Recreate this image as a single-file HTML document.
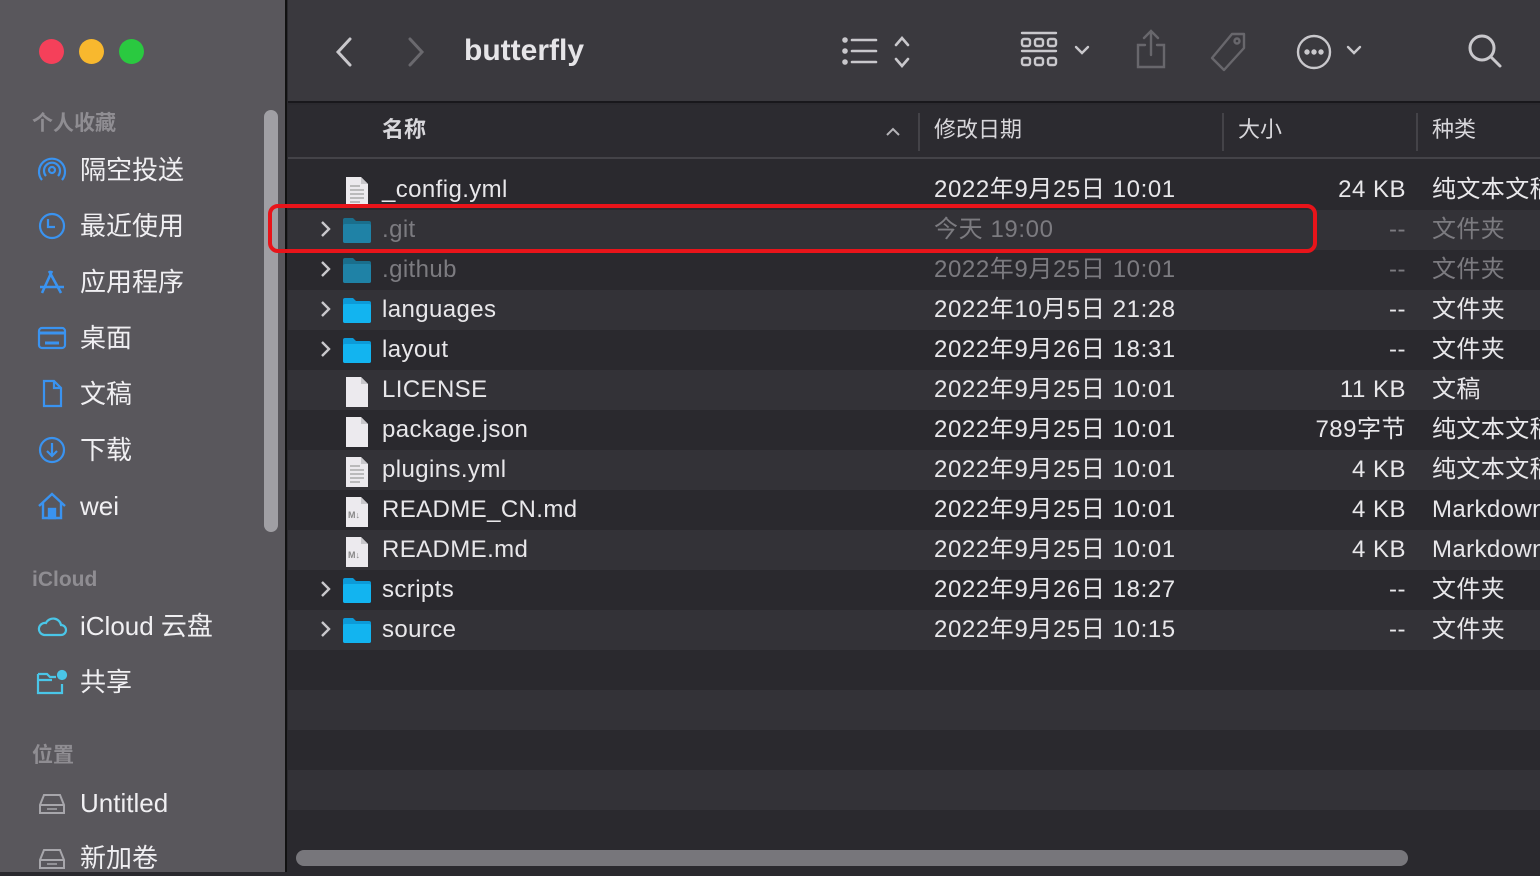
<!DOCTYPE html>
<html><head><meta charset="utf-8"><style>
*{margin:0;padding:0;box-sizing:border-box}
body{width:1540px;height:872px;overflow:hidden;background:#2a292e;font-family:"Liberation Sans","Noto Sans CJK SC",sans-serif;position:relative}
#side{position:absolute;left:0;top:0;width:287px;height:872px;background:#59575c;border-right:2px solid #111}
.dot{position:absolute;top:39px;width:25px;height:25px;border-radius:50%}
.sh{position:absolute;left:32px;font-size:21px;color:#8f8d92;font-weight:bold;line-height:26px}
.si{position:absolute;left:36px;height:36px;display:flex;align-items:center;font-size:26px;color:#f0eff2;line-height:36px}
.si svg{width:32px;height:32px;margin-right:12px;flex:none}
#sb{position:absolute;left:264px;top:110px;width:14px;height:422px;border-radius:7px;background:#a09fa4}
#main{position:absolute;left:288px;top:0;right:0;height:872px}
#tb{position:absolute;left:0;top:0;right:0;height:103px;background:#3a393e;border-bottom:2px solid #19181c}
#hd{position:absolute;left:0;top:105px;right:0;height:54px;background:#2c2b30;border-bottom:2px solid #444348;font-size:22px;color:#d8d7db;font-weight:bold}
#hd>div{line-height:28px}
.hs{position:absolute;top:8px;width:2px;height:38px;background:#444348}
.row{position:absolute;left:0;right:0;height:40px;font-size:24px;color:#e8e7ea}
.row.l{background:#333237}
.row div{position:absolute;top:5px;white-space:nowrap;line-height:30px;height:30px}
.nm{left:94px;letter-spacing:0.4px}.dt{left:646px;letter-spacing:0.6px}.sz{right:134px;text-align:right;letter-spacing:0.5px}.kd{left:1144px;letter-spacing:0.4px}
.dim{color:#7c7b80}
.chev{left:32px;top:8px!important}
.ic{left:54px;top:6px!important}
#red{position:absolute;left:268px;top:204px;width:1049px;height:49px;border:4px solid #e8141a;border-radius:10px}
#hscroll{position:absolute;left:296px;top:850px;width:1112px;height:16px;border-radius:8px;background:#77767b}
</style></head><body>
<div id="side">
<div class="dot" style="left:39px;background:#f5405a"></div>
<div class="dot" style="left:79px;background:#f8b82e"></div>
<div class="dot" style="left:119px;background:#2ac940"></div>
<div class="sh" style="top:111px">个人收藏</div>
<div class="si" style="top:152px"><svg viewBox="0 0 32 32" fill="none" stroke="#3a93f0" stroke-width="2.2"><circle cx="16" cy="16" r="3"/><path d="M10 22a8 8 0 1 1 12 0M6 26a13 13 0 1 1 20 0"/></svg><span>隔空投送</span></div>
<div class="si" style="top:208px"><svg viewBox="0 0 32 32" fill="none" stroke="#3a93f0" stroke-width="2.2"><circle cx="16" cy="16" r="12"/><path d="M12 9v8h7"/></svg><span>最近使用</span></div>
<div class="si" style="top:264px"><svg viewBox="0 0 32 32" fill="none" stroke="#3a93f0" stroke-width="2.6"><path d="M16 5L6 27M13 5l12 22M4 21h24"/></svg><span>应用程序</span></div>
<div class="si" style="top:320px"><svg viewBox="0 0 32 32" fill="none" stroke="#3a93f0" stroke-width="2.2"><rect x="3" y="6" width="26" height="20" rx="3"/><path d="M3 11h26M9 21h14" stroke-width="3"/></svg><span>桌面</span></div>
<div class="si" style="top:376px"><svg viewBox="0 0 32 32" fill="none" stroke="#3a93f0" stroke-width="2.2"><path d="M8 3h10l7 7v18H8zM18 3v7h7"/></svg><span>文稿</span></div>
<div class="si" style="top:432px"><svg viewBox="0 0 32 32" fill="none" stroke="#3a93f0" stroke-width="2.2"><circle cx="16" cy="16" r="12"/><path d="M16 9v13M11 17l5 5 5-5"/></svg><span>下载</span></div>
<div class="si" style="top:488px"><svg viewBox="0 0 32 32" fill="none" stroke="#3a93f0" stroke-width="2.4"><path d="M3 16L16 4l13 12M7 13v15h18V13"/><rect x="13" y="19" width="6" height="9" fill="#3a93f0"/></svg><span>wei</span></div>
<div class="sh" style="top:567px">iCloud</div>
<div class="si" style="top:608px"><svg viewBox="0 0 32 32" fill="none" stroke="#4ac6e8" stroke-width="2.2"><path d="M8 25h17a5 5 0 0 0 0-10 8 8 0 0 0-15-2 6 6 0 0 0-2 12z"/></svg><span>iCloud 云盘</span></div>
<div class="si" style="top:664px"><svg viewBox="0 0 32 32" fill="none" stroke="#4ac6e8" stroke-width="2.2"><path d="M2 8h9l3 3h6M2 8v19h24v-9M2 14h14"/><circle cx="26" cy="9" r="4" fill="#4ac6e8"/></svg><span>共享</span></div>
<div class="sh" style="top:743px">位置</div>
<div class="si" style="top:785px"><svg viewBox="0 0 32 32" fill="none" stroke="#a7a6ab" stroke-width="2"><path d="M8 8h16l4 10v8H4v-8zM4 18h24"/><path d="M11 22h10" stroke-width="1.5"/></svg><span>Untitled</span></div>
<div class="si" style="top:840px"><svg viewBox="0 0 32 32" fill="none" stroke="#a7a6ab" stroke-width="2"><path d="M8 8h16l4 10v8H4v-8zM4 18h24"/><path d="M11 22h10" stroke-width="1.5"/></svg><span>新加卷</span></div>
<div id="sb"></div>
</div>
<div id="main">
<div id="tb">
<svg style="position:absolute;left:44px;top:36px" width="24" height="32" viewBox="0 0 24 32" fill="none" stroke="#c9c8cc" stroke-width="3" stroke-linecap="round"><path d="M18 3L6 16l12 13"/></svg>
<svg style="position:absolute;left:116px;top:36px" width="24" height="32" viewBox="0 0 24 32" fill="none" stroke="#6a696e" stroke-width="3" stroke-linecap="round"><path d="M6 3l12 13L6 29"/></svg>
<div style="position:absolute;left:176px;top:33px;font-size:30px;line-height:36px;font-weight:bold;color:#e6e5e8">butterfly</div>
<svg style="position:absolute;left:554px;top:34px" width="72" height="36" viewBox="0 0 72 36" fill="none" stroke="#c9c8cc" stroke-width="2.6" stroke-linecap="round"><path d="M10 6h24M10 17h24M10 28h24"/><circle cx="3" cy="6" r="1.5" fill="#c9c8cc"/><circle cx="3" cy="17" r="1.5" fill="#c9c8cc"/><circle cx="3" cy="28" r="1.5" fill="#c9c8cc"/><path d="M54 11l6-7 6 7M54 25l6 7 6-7"/></svg>
<svg style="position:absolute;left:730px;top:30px" width="76" height="42" viewBox="0 0 76 42" fill="none" stroke="#c9c8cc" stroke-width="2.4" stroke-linecap="round"><path d="M4 3h34M4 21h34"/><rect x="4" y="9" width="8" height="7" rx="2"/><rect x="17" y="9" width="8" height="7" rx="2"/><rect x="30" y="9" width="8" height="7" rx="2"/><rect x="4" y="28" width="8" height="7" rx="2"/><rect x="17" y="28" width="8" height="7" rx="2"/><rect x="30" y="28" width="8" height="7" rx="2"/><path d="M58 17l6 6 6-6"/></svg>
<svg style="position:absolute;left:846px;top:28px" width="34" height="44" viewBox="0 0 34 44" fill="none" stroke="#68676c" stroke-width="2.4" stroke-linecap="round"><path d="M17 3v24M10 10l7-7 7 7M11 17H4v22h26V17h-7"/></svg>
<svg style="position:absolute;left:920px;top:30px" width="42" height="44" viewBox="0 0 42 44" fill="none" stroke="#68676c" stroke-width="2.4" stroke-linejoin="round"><path d="M24 4h12v14L16 40 4 28z"/><circle cx="29" cy="11" r="2.5"/></svg>
<svg style="position:absolute;left:1006px;top:32px" width="90" height="40" viewBox="0 0 90 40" fill="none" stroke="#c9c8cc" stroke-width="2.4" stroke-linecap="round"><circle cx="20" cy="20" r="16"/><circle cx="13" cy="20" r="1.5" fill="#c9c8cc"/><circle cx="20" cy="20" r="1.5" fill="#c9c8cc"/><circle cx="27" cy="20" r="1.5" fill="#c9c8cc"/><path d="M54 15l6 6 6-6"/></svg>
<svg style="position:absolute;left:1178px;top:32px" width="40" height="40" viewBox="0 0 40 40" fill="none" stroke="#c9c8cc" stroke-width="3" stroke-linecap="round"><circle cx="16" cy="16" r="12"/><path d="M25 25l9 9"/></svg>
</div>
<div id="hd">
<div style="position:absolute;left:94px;top:11px">名称</div>
<svg style="position:absolute;left:598px;top:22px" width="14" height="10" viewBox="0 0 14 10" fill="none" stroke="#b5b4b8" stroke-width="2"><path d="M1 8l6-6 6 6"/></svg>
<div class="hs" style="left:630px"></div>
<div style="position:absolute;left:646px;top:11px;font-weight:normal">修改日期</div>
<div class="hs" style="left:934px"></div>
<div style="position:absolute;left:950px;top:11px;font-weight:normal">大小</div>
<div class="hs" style="left:1128px"></div>
<div style="position:absolute;left:1144px;top:11px;font-weight:normal">种类</div>
</div>
<div id="rows"></div>
</div>
<div id="red"></div>
<div id="hscroll"></div>
<script>
var F='<svg width="30" height="28" viewBox="0 0 30 28"><path d="M1 4a2 2 0 0 1 2-2h8l3 3h13a2 2 0 0 1 2 2v18a2 2 0 0 1-2 2H3a2 2 0 0 1-2-2z" fill="C"/><rect x="1" y="8" width="28" height="19" rx="2" fill="D"/></svg>';
var DOC='<svg width="30" height="32" viewBox="0 0 30 32"><path d="M4 1h15l7 7v23H4z" fill="#eceaee"/><path d="M19 1v7h7" fill="#c8c7cb"/>X</svg>';
var LINES='<path d="M8 10h10M8 14h14M8 18h14M8 22h14M8 26h10" stroke="#aaa" stroke-width="1.5"/>';
var MD='<text x="6" y="22" font-size="9" font-family="Liberation Sans" font-weight="bold" fill="#888">M↓</text>';
var rows=[
['doc',LINES,'_config.yml','2022年9月25日 10:01','24 KB','纯文本文稿',0],
['fd','','.git','今天 19:00','--','文件夹',1],
['fd','','.github','2022年9月25日 10:01','--','文件夹',1],
['f','','languages','2022年10月5日 21:28','--','文件夹',0],
['f','','layout','2022年9月26日 18:31','--','文件夹',0],
['doc','','LICENSE','2022年9月25日 10:01','11 KB','文稿',0],
['doc','','package.json','2022年9月25日 10:01','789字节','纯文本文稿',0],
['doc',LINES,'plugins.yml','2022年9月25日 10:01','4 KB','纯文本文稿',0],
['doc',MD,'README_CN.md','2022年9月25日 10:01','4 KB','Markdown',0],
['doc',MD,'README.md','2022年9月25日 10:01','4 KB','Markdown',0],
['f','','scripts','2022年9月26日 18:27','--','文件夹',0],
['f','','source','2022年9月25日 10:15','--','文件夹',0]];
var h='';
for(var i=0;i<17;i++){
 var y=170+i*40;
 h+='<div class="row'+(i%2?' l':'')+'" style="top:'+y+'px">';
 if(i<rows.length){var r=rows[i];var dm=r[6]?' dim':'';
  if(r[0]!='doc')h+='<div class="chev"><svg width="12" height="22" viewBox="0 0 12 22" fill="none" stroke="#c9c8cc" stroke-width="2.4"><path d="M2 4l7 7-7 7"/></svg></div>';
  var ic=r[0]=='doc'?DOC.replace('X',r[1]):(r[0]=='fd'?F.replace('C','#1a6e8c').replace('D','#1f82a6'):F.replace('C','#0c9ad8').replace('D','#12b4f0'));
  h+='<div class="ic">'+ic+'</div><div class="nm'+dm+'">'+r[2]+'</div><div class="dt'+dm+'">'+r[3]+'</div><div class="sz'+dm+'">'+r[4]+'</div><div class="kd'+dm+'">'+r[5]+'</div>';}
 h+='</div>';}
document.getElementById('rows').innerHTML=h;
</script>
</body></html>
